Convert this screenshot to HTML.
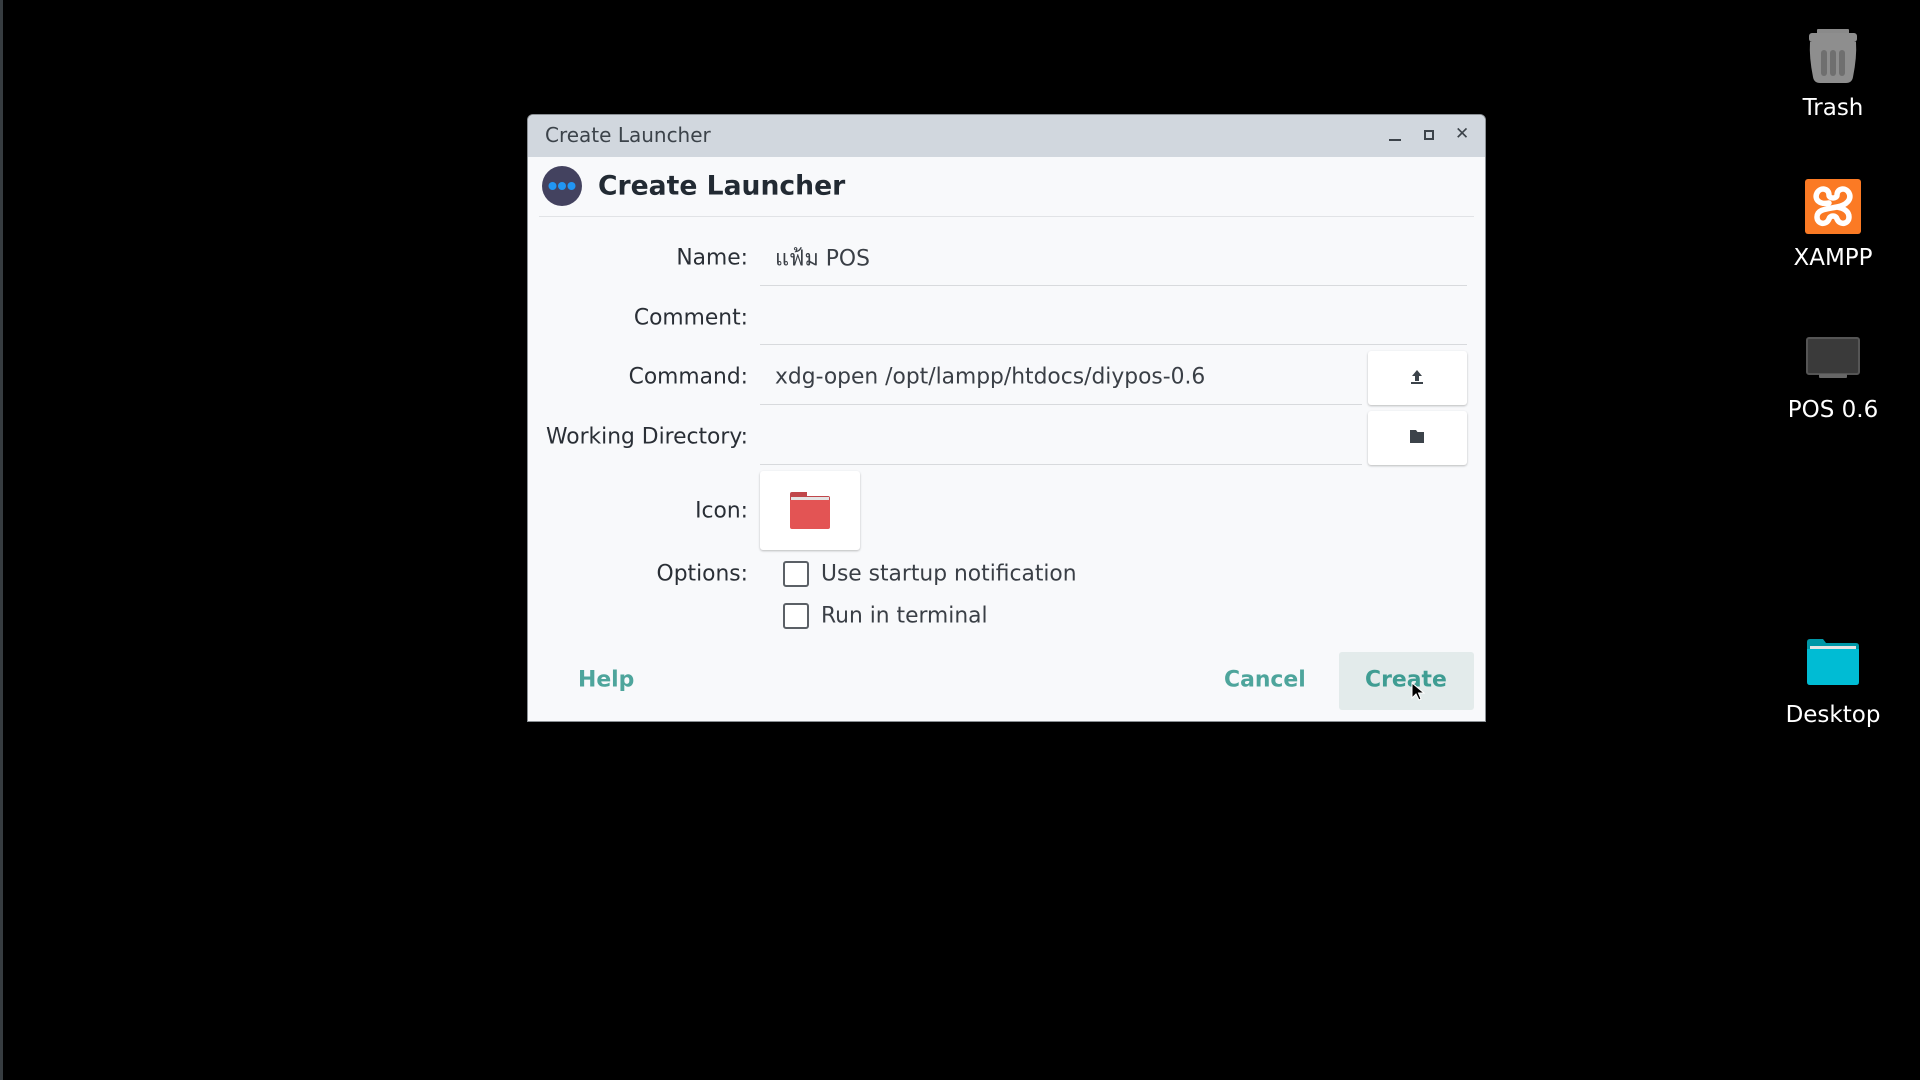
<!DOCTYPE html>
<html><head><meta charset="utf-8"><style>
*{margin:0;padding:0;box-sizing:border-box}
body{width:1920px;height:1080px;background:#000;position:relative;overflow:hidden;font-family:"DejaVu Sans","Liberation Sans",sans-serif}
.a{position:absolute}
.lbl{position:absolute;right:1172px;font-size:21.8px;color:#2a2f36;transform:translateY(-50%);white-space:nowrap}
.txt{position:absolute;font-size:21.8px;color:#3a3f46;transform:translateY(-50%);white-space:nowrap}
.line{position:absolute;height:1px;background:#d8dadd}
.btn{position:absolute;background:#fff;border-radius:3px;box-shadow:0 1px 2px rgba(0,0,0,.25)}
.cb{position:absolute;width:26px;height:26px;border:2px solid #5b6066;border-radius:3px;background:#fff}
.dl{position:absolute;color:#fff;font-size:23px;width:160px;text-align:center;left:1753px;transform:translateY(-50%)}
</style></head><body>
<div class="a" style="left:0;top:0;width:3px;height:1080px;background:#363c40"></div>

<div class="a" style="left:527px;top:114px;width:959px;height:608px;background:#f8f9fb;border:1px solid #8a8f94;border-radius:6px 6px 0 0;overflow:hidden">
  <div class="a" style="left:0;top:0;width:100%;height:42px;background:#d1d7de"></div>
</div>
<div class="txt" style="left:545px;top:135px;font-size:20px;color:#3c434a">Create Launcher</div>
<div class="a" style="left:1389px;top:139px;width:12px;height:2px;background:#3c434a"></div>
<div class="a" style="left:1424px;top:130px;width:10px;height:10px;border:2px solid #3c434a"></div>
<div class="a" style="left:1455px;top:124px;font-size:17px;font-weight:bold;color:#3c434a">✕</div>

<svg class="a" style="left:542px;top:166px" width="40" height="40"><circle cx="20" cy="20" r="20" fill="#43425f"/><circle cx="10.5" cy="20" r="4" fill="#2196f3"/><circle cx="20" cy="20" r="4" fill="#2196f3"/><circle cx="29.5" cy="20" r="4" fill="#2196f3"/></svg>
<div class="txt" style="left:598px;top:186px;font-size:26.6px;font-weight:bold;color:#222a33">Create Launcher</div>
<div class="line" style="left:539px;top:216px;width:935px;background:#e1e3e6"></div>

<div class="lbl" style="top:258px">Name:</div>
<div class="txt" style="left:775px;top:258px">แฟ้ม POS</div>
<div class="line" style="left:760px;top:285px;width:707px"></div>

<div class="lbl" style="top:318px">Comment:</div>
<div class="line" style="left:760px;top:344px;width:707px"></div>

<div class="lbl" style="top:377px">Command:</div>
<div class="txt" style="left:775px;top:377px">xdg-open /opt/lampp/htdocs/diypos-0.6</div>
<div class="line" style="left:760px;top:404px;width:602px"></div>
<div class="btn" style="left:1368px;top:351px;width:99px;height:54px"></div>
<svg class="a" style="left:1409px;top:369px" width="16" height="16"><path d="M8 1 L13 7 H10 V12 H6 V7 H3 Z" fill="#3c434a"/><rect x="2" y="13" width="12" height="2" fill="#3c434a"/></svg>

<div class="lbl" style="top:437px">Working Directory:</div>
<div class="line" style="left:760px;top:464px;width:602px"></div>
<div class="btn" style="left:1368px;top:411px;width:99px;height:54px"></div>
<svg class="a" style="left:1410px;top:430px" width="15" height="14"><path d="M0 0 H6 L7.5 2 H14 V13 H0 Z" fill="#3c434a"/></svg>

<div class="lbl" style="top:511px">Icon:</div>
<div class="btn" style="left:760px;top:471px;width:100px;height:79px"></div>
<svg class="a" style="left:790px;top:492px" width="40" height="38"><path d="M0 2 Q0 0 2 0 H17 V4 H38 Q40 4 40 6 V10 H0 Z" fill="#c0464a"/><rect x="1" y="5" width="38" height="5" fill="#e4e4e4"/><path d="M0 8 H40 V35 Q40 37 38 37 H2 Q0 37 0 35 Z" fill="#e35454"/></svg>

<div class="lbl" style="top:574px">Options:</div>
<div class="cb" style="left:783px;top:561px"></div>
<div class="txt" style="left:821px;top:574px">Use startup notification</div>
<div class="cb" style="left:783px;top:603px"></div>
<div class="txt" style="left:821px;top:616px">Run in terminal</div>

<div class="txt" style="left:578px;top:680px;font-weight:bold;color:#4ea59c;font-size:21.9px">Help</div>
<div class="txt" style="left:1224px;top:680px;font-weight:bold;color:#4ea59c;font-size:21.9px">Cancel</div>
<div class="a" style="left:1339px;top:652px;width:135px;height:58px;background:#e3ebeb;border-radius:3px"></div>
<div class="txt" style="left:1365px;top:680px;font-weight:bold;color:#3f9d93;font-size:21.9px">Create</div>
<svg class="a" style="left:1411px;top:682px" width="14" height="20"><path d="M1 1 V16 L5 12 L8 18 L10 17 L7.5 11 H13 Z" fill="#000" stroke="#fff" stroke-width="1"/></svg>

<svg class="a" style="left:1805px;top:27px" width="56" height="58"><rect x="12" y="2" width="32" height="5" rx="1" fill="#8a8a8a"/><rect x="4" y="6" width="48" height="9" rx="3" fill="#8e8e8e"/><path d="M5 15 H51 Q52 30 48 50 Q47 56 41 56 H15 Q9 56 8 50 Q4 30 5 15 Z" fill="#8e8e8e"/><rect x="16" y="23" width="6" height="26" rx="3" fill="#6f6f6f"/><rect x="25" y="23" width="6" height="26" rx="3" fill="#6f6f6f"/><rect x="34" y="23" width="6" height="26" rx="3" fill="#6f6f6f"/></svg>
<div class="dl" style="top:108px">Trash</div>

<svg class="a" style="left:1805px;top:179px" width="56" height="55"><rect width="56" height="55" rx="3" fill="#fb7a24"/><path d="M24 24 C14 26 9 20 12 14 C15 8 24 9 24 16 C24 20 32 20 32 16 C32 9 41 8 44 14 C47 20 42 26 32 28 C22 30 12 30 12 38 C12 45 21 47 24 40 C25 36 31 36 32 40 C35 47 44 45 44 38 C44 32 38 29 32 28" fill="none" stroke="#fff" stroke-width="5.5" stroke-linecap="round"/></svg>
<div class="dl" style="top:258px">XAMPP</div>

<svg class="a" style="left:1806px;top:337px" width="54" height="44"><rect x="1" y="1" width="52" height="36" rx="2" fill="#3a3a3a" stroke="#555" stroke-width="2"/><rect x="13" y="37" width="28" height="4" rx="1" fill="#666"/></svg>
<div class="dl" style="top:410px">POS 0.6</div>

<svg class="a" style="left:1807px;top:639px" width="52" height="46"><path d="M0 3 Q0 0 3 0 H16 L19 4 H49 Q52 4 52 7 V10 H0 Z" fill="#0097a7"/><rect x="3" y="7" width="46" height="6" fill="#e6e6e6"/><path d="M0 10 H52 V43 Q52 46 49 46 H3 Q0 46 0 43 Z" fill="#00bcd4"/></svg>
<div class="dl" style="top:715px">Desktop</div>
</body></html>
